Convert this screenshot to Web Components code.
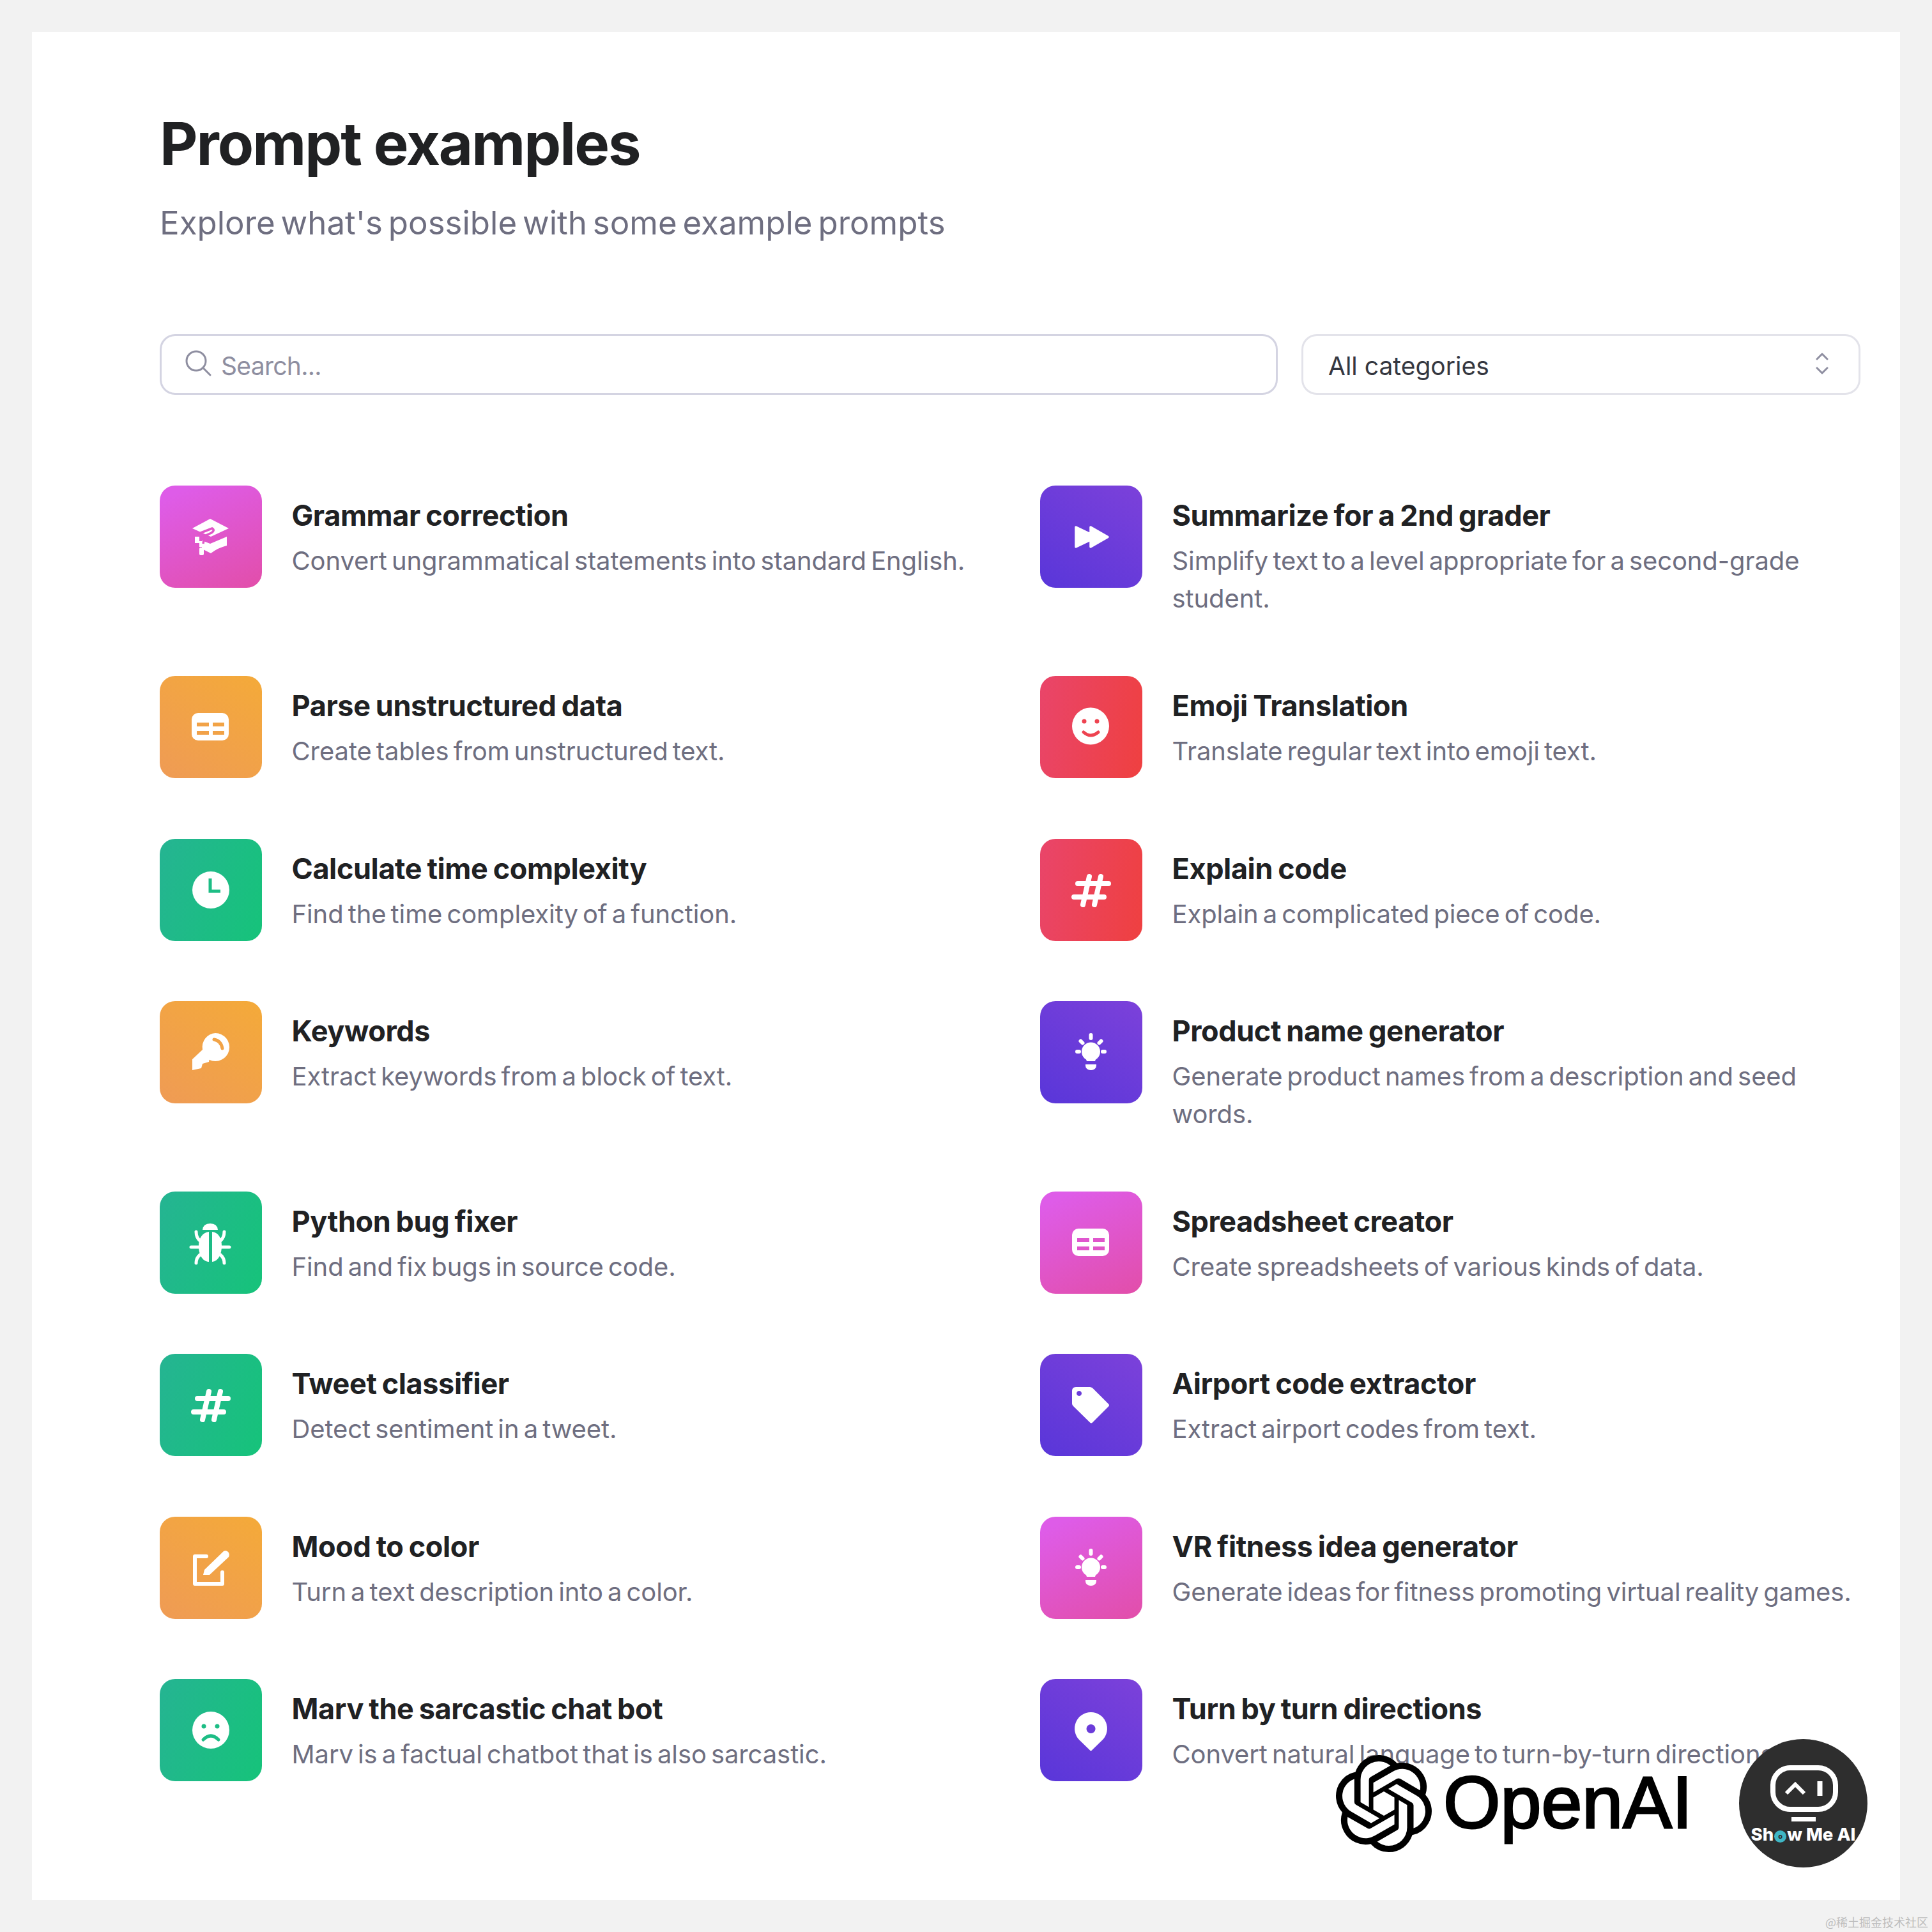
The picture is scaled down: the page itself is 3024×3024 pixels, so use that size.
<!doctype html>
<html lang="en"><head><meta charset="utf-8"><title>Prompt examples</title>
<style>
html,body{margin:0;padding:0;background:#f2f2f2;}
body{font-family:Inter,"Liberation Sans",sans-serif;}
</style></head><body>
<pe-page>
  <pe-header slot="header" heading="Prompt examples" sub="Explore what's possible with some example prompts"></pe-header>
  <pe-toolbar slot="toolbar">
    <pe-search>Search...</pe-search>
    <pe-select>All categories</pe-select>
  </pe-toolbar>
  <pe-grid slot="list">
    <pe-item tone="pink" icon="cap" name="Grammar correction">Convert ungrammatical statements into standard English.</pe-item>
    <pe-item tone="purple" icon="forward" name="Summarize for a 2nd grader">Simplify text to a level appropriate for a second-grade student.</pe-item>
    <pe-item tone="orange" icon="table" name="Parse unstructured data">Create tables from unstructured text.</pe-item>
    <pe-item tone="red" icon="smile" name="Emoji Translation">Translate regular text into emoji text.</pe-item>
    <pe-item tone="green" icon="clock" name="Calculate time complexity">Find the time complexity of a function.</pe-item>
    <pe-item tone="red" icon="hash" name="Explain code">Explain a complicated piece of code.</pe-item>
    <pe-item tone="orange" icon="key" name="Keywords">Extract keywords from a block of text.</pe-item>
    <pe-item tone="purple" icon="bulb" name="Product name generator">Generate product names from a description and seed words.</pe-item>
    <pe-item tone="green" icon="bug" name="Python bug fixer">Find and fix bugs in source code.</pe-item>
    <pe-item tone="pink" icon="table" name="Spreadsheet creator">Create spreadsheets of various kinds of data.</pe-item>
    <pe-item tone="green" icon="hash" name="Tweet classifier">Detect sentiment in a tweet.</pe-item>
    <pe-item tone="purple" icon="tag" name="Airport code extractor">Extract airport codes from text.</pe-item>
    <pe-item tone="orange" icon="edit" name="Mood to color">Turn a text description into a color.</pe-item>
    <pe-item tone="pink" icon="bulb" name="VR fitness idea generator">Generate ideas for fitness promoting virtual reality games.</pe-item>
    <pe-item tone="green" icon="sad" name="Marv the sarcastic chat bot">Marv is a factual chatbot that is also sarcastic.</pe-item>
    <pe-item tone="purple" icon="pin" name="Turn by turn directions">Convert natural language to turn-by-turn directions.</pe-item>
  </pe-grid>
  <pe-brand slot="overlay"></pe-brand>
</pe-page>
<pe-watermark>@稀土掘金技术社区</pe-watermark>
<script>
function shadow(host, html){ const r = host.attachShadow({mode:'open'}); r.innerHTML = html; return r; }

const ICONS = {
  cap:`<path d="M51 67 79 52l29 15-28 13z"/><path d="M66 86l13 5 26-11v14q-13 3-25 12l-14-7z"/><path d="M55 80h7v7h6v9h-6v-6h-7z"/><rect x="62" y="97" width="7" height="12" rx="2"/><path d="M59 76 82 67q5 3-1 7l-11 5-2 12" fill="none" stroke="var(--cut)" stroke-width="3.5"/>`,
  forward:`<path d="M56 65 79 76V65l27 15.500L79 96V85L56 96z" stroke="#fff" stroke-width="3.500" stroke-linejoin="round"/>`,
  table:`<path fill-rule="evenodd" d="M60 58h38a10 10 0 0 1 10 10v23a10 10 0 0 1-10 10H60a10 10 0 0 1-10-10V68a10 10 0 0 1 10-10zM58 73v6h19v-6zM83 73v6h18v-6zM58 86v6h19v-6zM83 86v6h18v-6z"/>`,
  clock:`<circle cx="80" cy="80" r="29"/><path d="M79 62v20h16" fill="none" stroke="var(--cut)" stroke-width="5"/>`,
  hash:`<path d="M59 70h48M53 91h47M77 59 67 103M95 59 85 103" fill="none" stroke="#fff" stroke-width="8" stroke-linecap="round"/>`,
  key:`<path d="M87 50a22 22 0 1 1-9.500 41.800L77 95l-10 3-2 7-14 3V91l16-15a22 22 0 0 1 20-26z"/><path d="M85 60q11 2 13 14" fill="none" stroke="var(--cut)" stroke-width="5" stroke-linecap="round"/>`,
  bug:`<path d="M67 60q1-10 12-10t12 10z"/><path d="M77 63v47C66 109 61 98 61 85c0-12 6-21 16-22zM82 63v47c10-1 15-12 15-25 0-12-5-21-15-22z"/><path d="M57 63q0 9 6 14M101 63q0 9-6 14M49 87h13M109 87H96M57 112q0-8 6-13M101 112q0-8-6-13" fill="none" stroke="#fff" stroke-width="5" stroke-linecap="round"/>`,
  edit:`<path d="M73 62H55v43h43V87" fill="none" stroke="#fff" stroke-width="6" stroke-linecap="round" stroke-linejoin="round"/><path d="M68 91l2-8 30-29q4-2 7 1t1 8L78 91z"/>`,
  sad:`<circle cx="80" cy="80" r="29"/><circle cx="69" cy="74" r="3.500" fill="var(--cut)"/><circle cx="90" cy="74" r="3.500" fill="var(--cut)"/><path d="M68 95q12-12 24 0" fill="none" stroke="var(--cut)" stroke-width="5" stroke-linecap="round"/>`,
  smile:`<circle cx="79" cy="78.500" r="29"/><circle cx="69" cy="71" r="3.500" fill="var(--cut)"/><circle cx="89" cy="71" r="3.500" fill="var(--cut)"/><path d="M68 88q11 10 23 0" fill="none" stroke="var(--cut)" stroke-width="5" stroke-linecap="round"/>`,
  bulb:`<circle cx="79.500" cy="79" r="14.500"/><path d="M71 88h17l-2 6H73z"/><path d="M71 99h17v2a8 7 0 0 1-8 7h-1a8 7 0 0 1-8-7z"/><path d="M79.500 53v5M58 79h3M98 79h3M63.500 62.500l3 3M95.500 62.500l-3 3" fill="none" stroke="#fff" stroke-width="6" stroke-linecap="round"/>`,
  tag:`<path fill-rule="evenodd" d="M56 52h22q2 0 4 1.500l25 25q2 2 0 4l-25 25q-2 2-4 0L52 82q-2-2-2-4V58q0-6 6-6zM61 58a4 4 0 1 0 .1 0z"/>`,
  pin:`<path fill-rule="evenodd" d="M79.500 52a25.500 25.500 0 0 1 18 43.500L79.500 113 61.500 95.500a25.500 25.500 0 0 1 18-43.500zM79.500 71a7 7 0 1 0 .1 0z"/>`
};
const TONES = {
  pink:  ['linear-gradient(155deg,#de5ce8 10%,#e24ea9 100%)','#e056c8'],
  purple:['linear-gradient(215deg,#7c41da 0%,#5936d9 100%)','#6a3bd9'],
  orange:['linear-gradient(215deg,#f4aa39 0%,#ef9b55 100%)','#f2a346'],
  green: ['linear-gradient(110deg,#25b492 0%,#16c37a 100%)','#1dbd85'],
  red:   ['linear-gradient(100deg,#e9456a 0%,#ef4040 100%)','#ee4350']
};

customElements.define('pe-page', class extends HTMLElement{
  constructor(){super();shadow(this,`<style>
    :host{display:block;box-sizing:border-box;width:3024px;height:3024px;padding:50px;background:#f2f2f2;}
    .card{position:relative;box-sizing:border-box;width:2924px;height:2924px;background:#fff;padding:120px 62px 0 200px;}
  </style><div class="card"><slot name="header"></slot><slot name="toolbar"></slot><slot name="list"></slot><slot name="overlay"></slot></div>`);}
});
customElements.define('pe-header', class extends HTMLElement{
  constructor(){super();shadow(this,`<style>
    :host{display:block;}
    h1{margin:0;font:700 92px/110px Inter,sans-serif;letter-spacing:-2px;color:#202123;}
    p{margin:39px 0 0;font:400 51px/60px Inter,sans-serif;word-spacing:-5.500px;color:#6e6e80;}
  </style><h1>${this.getAttribute('heading')}</h1><p>${this.getAttribute('sub')}</p>`);}
});
customElements.define('pe-toolbar', class extends HTMLElement{
  constructor(){super();shadow(this,`<style>
    :host{display:flex;gap:37px;margin-top:144px;height:95px;}
  </style><slot></slot>`);}
});
customElements.define('pe-search', class extends HTMLElement{
  constructor(){super();shadow(this,`<style>
    :host{display:flex;box-sizing:border-box;width:1750px;height:95px;align-items:center;gap:14px;padding:0 0 0 37px;border:3px solid #d4d4e2;border-radius:24px;background:#fff;font:400 39px/60px Inter,sans-serif;letter-spacing:-.7px;color:#8e8ea0;}
    svg{width:42px;height:42px;flex:none;margin-top:-4px;}
    span{padding-top:4px;}
  </style><svg viewBox="0 0 42 42" fill="none" stroke="#8e8ea0" stroke-width="3" stroke-linecap="round"><circle cx="17" cy="17" r="15"/><path d="M28 28l11 11"/></svg><span><slot></slot></span>`);}
});
customElements.define('pe-select', class extends HTMLElement{
  constructor(){super();shadow(this,`<style>
    :host{display:flex;box-sizing:border-box;width:875px;height:95px;align-items:center;justify-content:space-between;padding:0 45px 0 39px;border:3px solid #e3e3ea;border-radius:24px;background:#fff;font:400 39px/60px Inter,sans-serif;color:#353740;}
    span{padding-top:4px;}
    svg{width:24px;height:34px;flex:none;margin-top:-3px;}
  </style><span><slot></slot></span><svg viewBox="0 0 24 34" fill="none" stroke="#8e8ea0" stroke-width="3" stroke-linecap="round" stroke-linejoin="round"><path d="M4 10l8-8 8 8M4 24l8 8 8-8"/></svg>`);}
});
customElements.define('pe-grid', class extends HTMLElement{
  constructor(){super();shadow(this,`<style>
    :host{display:grid;grid-template-columns:1284px 1284px;column-gap:94px;row-gap:94.300px;margin-top:142px;}
  </style><slot></slot>`);}
});
customElements.define('pe-item', class extends HTMLElement{
  constructor(){super();shadow(this,`<style>
    :host{display:flex;gap:46.500px;align-items:flex-start;min-height:160px;}
    .txt{flex:1;min-width:0;padding-top:21px;margin-bottom:-2px;}
    h3{margin:0 0 15px;font:650 45px/52px Inter,sans-serif;letter-spacing:-.4px;word-spacing:-2px;color:#202123;}
    p{margin:0;font:400 40px/59px Inter,sans-serif;letter-spacing:-.1px;word-spacing:-4px;color:#6e6e80;}
  </style><pe-icon tone="${this.getAttribute('tone')}" icon="${this.getAttribute('icon')}"></pe-icon><div class="txt"><h3>${this.getAttribute('name')}</h3><p><slot></slot></p></div>`);}
});
customElements.define('pe-icon', class extends HTMLElement{
  constructor(){super();}
  connectedCallback(){ if(this.shadowRoot) return;
    const [bg,cut] = TONES[this.getAttribute('tone')];
    shadow(this,`<style>
      :host{display:block;flex:none;width:160px;height:160px;border-radius:24px;background:${bg};--cut:${cut};}
      svg{display:block;width:160px;height:160px;fill:#fff;}
    </style><svg viewBox="0 0 160 160">${ICONS[this.getAttribute('icon')]}</svg>`);
  }
});
const KNOT_OUT = "M22.2819 9.8211a5.9847 5.9847 0 0 0-.5157-4.9108 6.0462 6.0462 0 0 0-6.5098-2.9A6.0651 6.0651 0 0 0 4.9807 4.1818a5.9847 5.9847 0 0 0-3.9977 2.9 6.0462 6.0462 0 0 0 .7427 7.0966 5.98 5.98 0 0 0 .511 4.9107 6.051 6.051 0 0 0 6.5146 2.9001A5.9847 5.9847 0 0 0 13.2599 24a6.0557 6.0557 0 0 0 5.7718-4.2058 5.9894 5.9894 0 0 0 3.9977-2.9001 6.0557 6.0557 0 0 0-.7475-7.0729z";
const KNOT = KNOT_OUT + "m-9.022 12.6081a4.4755 4.4755 0 0 1-2.8764-1.0408l.1419-.0804 4.7783-2.7582a.7948.7948 0 0 0 .3927-.6813v-6.7369l2.02 1.1686a.071.071 0 0 1 .038.052v5.5826a4.504 4.504 0 0 1-4.4945 4.4944zm-9.6607-4.1254a4.4708 4.4708 0 0 1-.5346-3.0137l.142.0852 4.783 2.7582a.7712.7712 0 0 0 .7806 0l5.8428-3.3685v2.3324a.0804.0804 0 0 1-.0332.0615L9.74 19.9502a4.4992 4.4992 0 0 1-6.1408-1.6464zM2.3408 7.8956a4.485 4.485 0 0 1 2.3655-1.9728V11.6a.7664.7664 0 0 0 .3879.6765l5.8144 3.3543-2.0201 1.1685a.0757.0757 0 0 1-.071 0l-4.8303-2.7865A4.504 4.504 0 0 1 2.3408 7.872zm16.5963 3.8558L13.1038 8.364 15.1192 7.2a.0757.0757 0 0 1 .071 0l4.8303 2.7913a4.4944 4.4944 0 0 1-.6765 8.1042v-5.6772a.79.79 0 0 0-.407-.667zm2.0107-3.0231l-.142-.0852-4.7735-2.7818a.7759.7759 0 0 0-.7854 0L9.409 9.2297V6.8974a.0662.0662 0 0 1 .0284-.0615l4.8303-2.7866a4.4992 4.4992 0 0 1 6.6802 4.66zM8.3065 12.863l-2.02-1.1638a.0804.0804 0 0 1-.038-.0567V6.0742a4.4992 4.4992 0 0 1 7.3757-3.4537l-.142.0805L8.704 5.459a.7948.7948 0 0 0-.3927.6813zm1.0976-2.3654l2.602-1.4998 2.6069 1.4998v2.9994l-2.5974 1.4997-2.6067-1.4997Z";
customElements.define('pe-brand', class extends HTMLElement{
  constructor(){super();shadow(this,`<style>
    :host{position:absolute;left:2040px;top:2672px;width:833px;height:201px;display:flex;align-items:center;}
    .knot{width:152px;height:152px;flex:none;display:block;}
    .word{margin:-4px 0 0 17px;font:400 115px/130px "Liberation Sans",sans-serif;color:#000;-webkit-text-stroke:3px #000;}
    .badge{margin-left:auto;flex:none;width:201px;height:201px;border-radius:50%;background:#2e2e2e;overflow:hidden;display:flex;flex-direction:column;align-items:center;}
    .mon{display:block;width:201px;height:137px;flex:none;}
    .label{font:800 27.500px/24px Inter,sans-serif;color:#fff;white-space:nowrap;}
    .o{display:inline-block;width:19px;height:19px;margin:0 1px;border-radius:50%;background:#3fb6c5;color:#2e2e2e;font-size:11px;line-height:19px;text-align:center;vertical-align:3px;}
  </style>
  <svg class="knot" viewBox="0 0 24 24"><path d="${KNOT_OUT}" fill="#fff"/><path d="${KNOT}" fill="#000"/></svg>
  <span class="word">OpenAI</span>
  <div class="badge">
    <svg class="mon" viewBox="0 0 201 137" fill="none" stroke="#fff"><rect x="53" y="45" width="98" height="65" rx="27" stroke-width="8"/><path d="M74 85l14-14 14 14" stroke-width="6"/><path d="M126.500 66v23" stroke-width="8"/><path d="M82 125.500h38" stroke-width="7"/></svg>
    <div class="label">Sh<span class="o">o</span>w Me AI</div>
  </div>`);}
});
customElements.define('pe-watermark', class extends HTMLElement{
  constructor(){super();shadow(this,`<style>
    :host{position:absolute;right:6px;top:2996px;font:400 18px/24px "Noto Sans CJK SC",sans-serif;color:#bdbdbd;white-space:nowrap;}
  </style><slot></slot>`);}
});
</script>
</body></html>
